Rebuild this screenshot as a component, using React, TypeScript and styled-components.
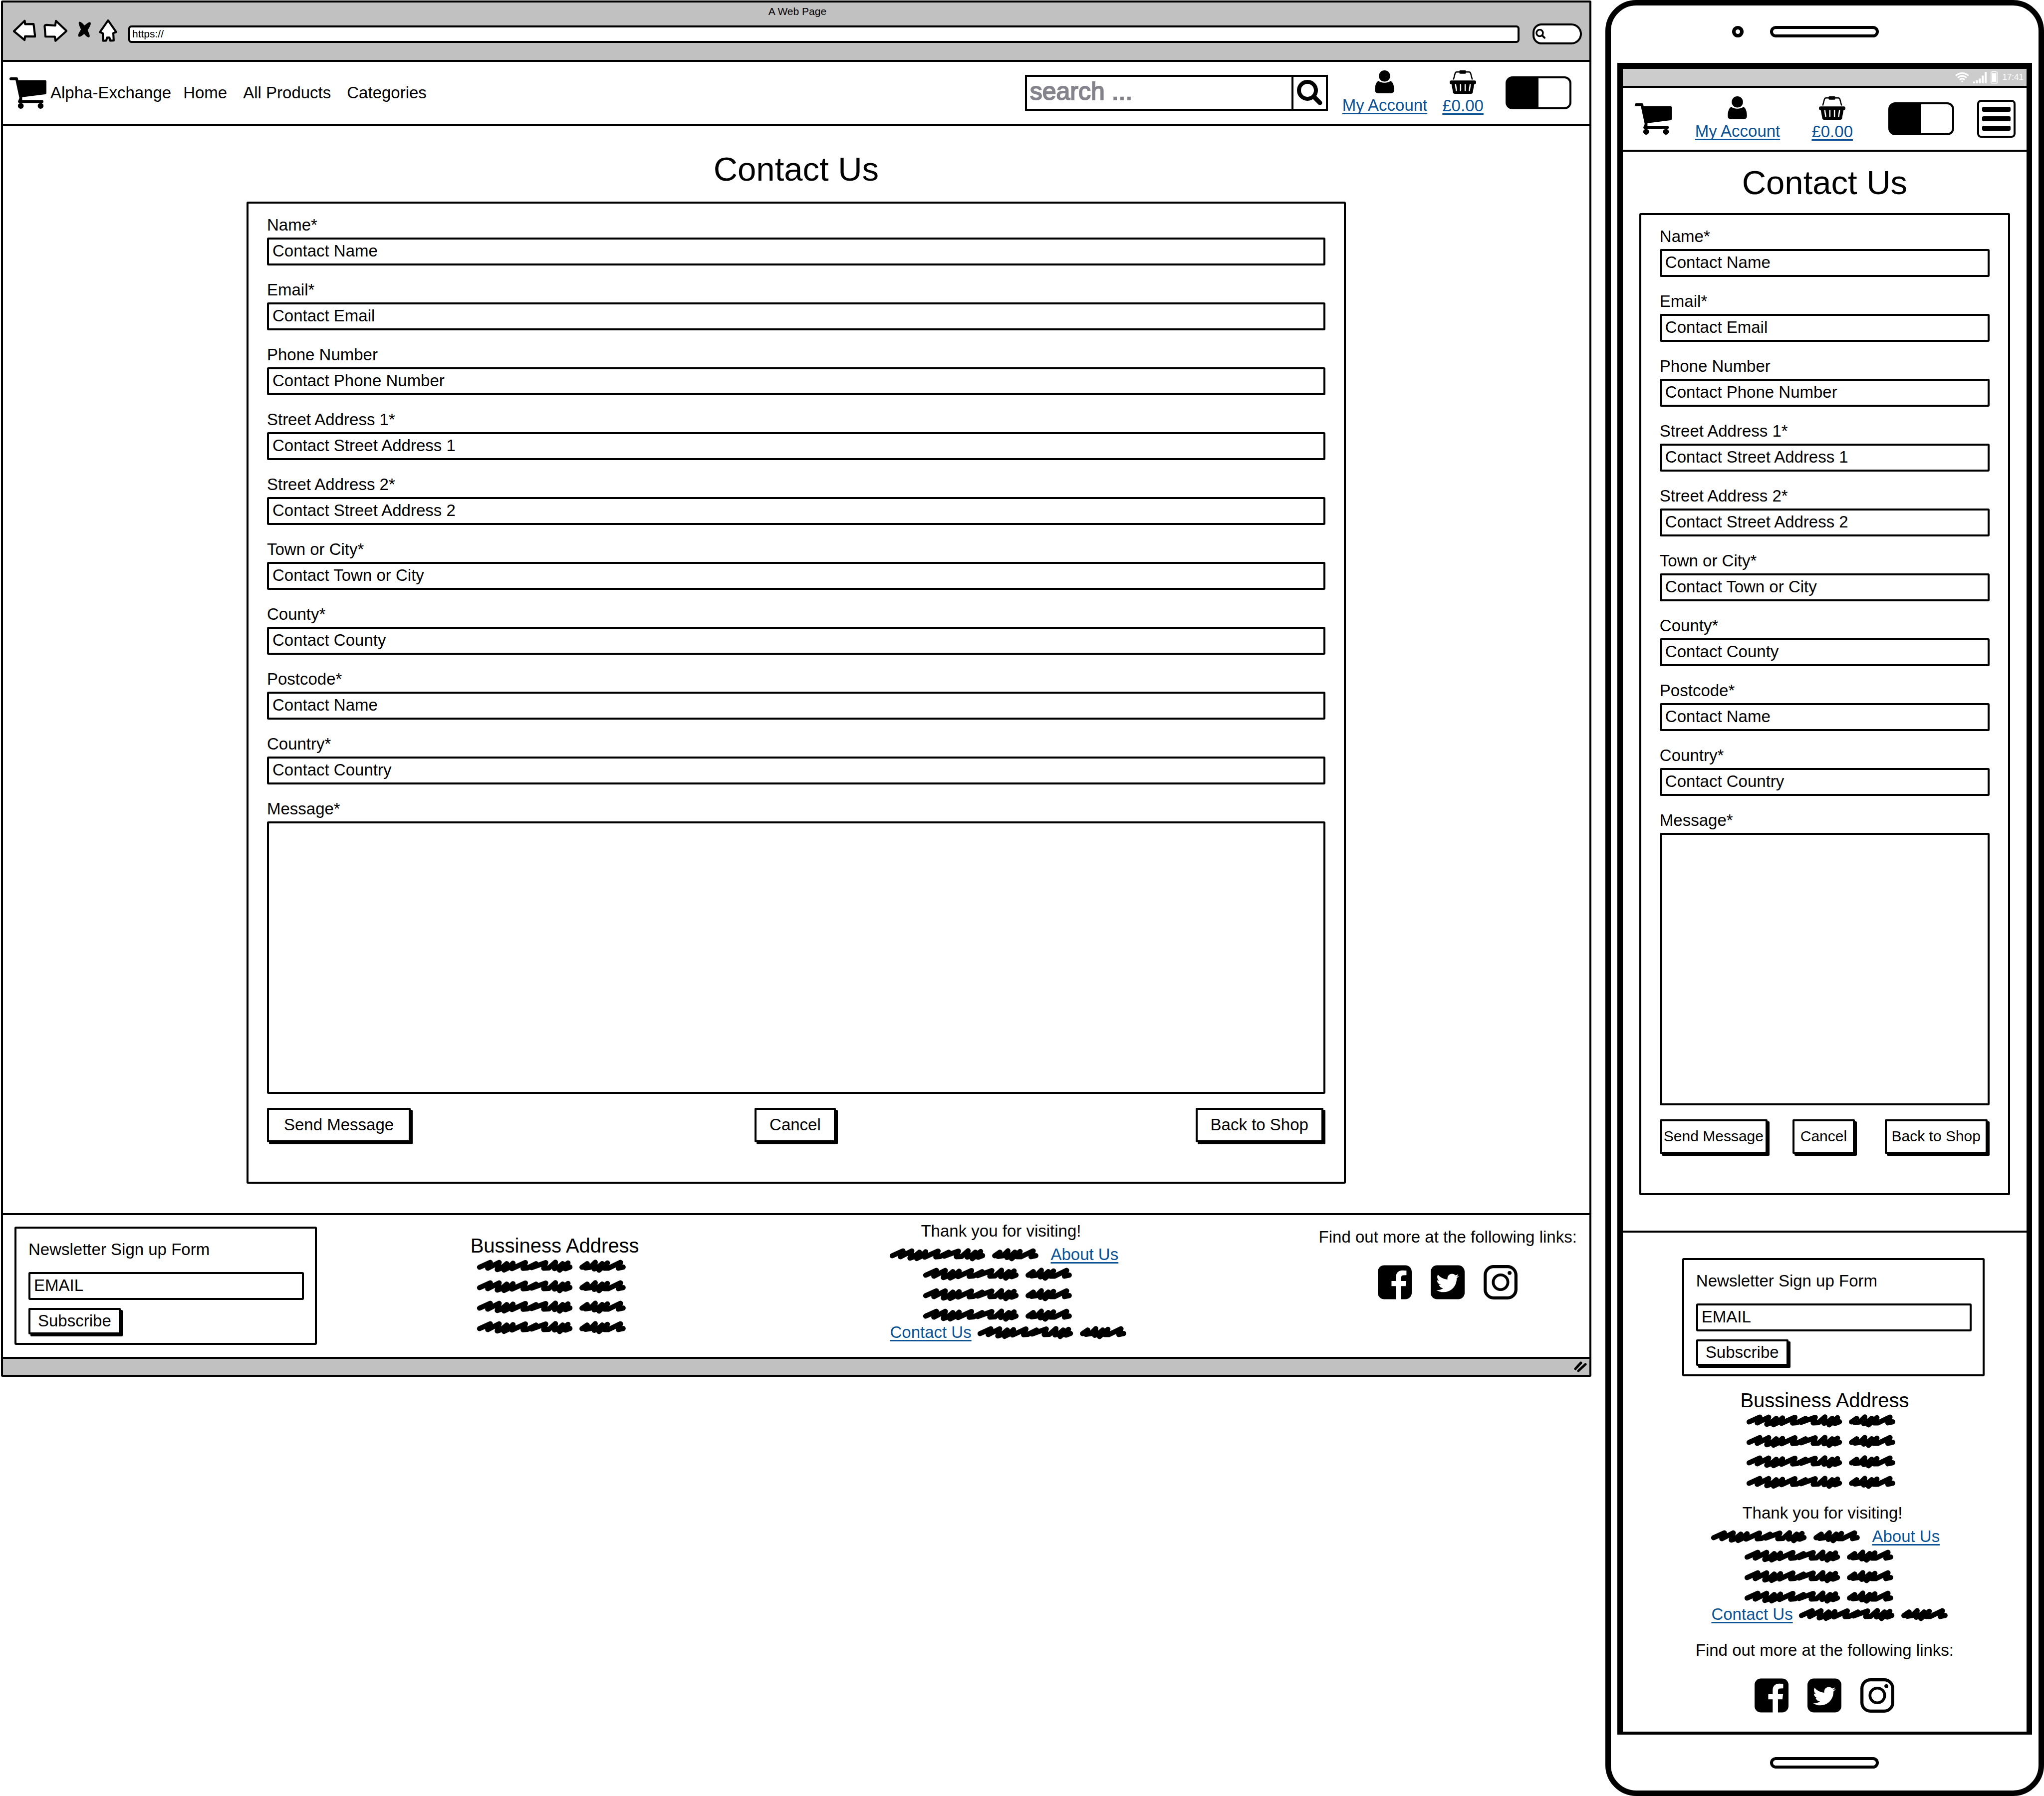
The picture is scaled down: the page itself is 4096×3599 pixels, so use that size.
import React, { useId } from 'react';
import styled, { createGlobalStyle } from 'styled-components';

const ink = '#000';
const chrome = '#c1c1c1';
const linkBlue = '#0b5394';

const GlobalStyle = createGlobalStyle`
  *, *::before, *::after { box-sizing: border-box; }
  body {
    margin: 0;
    background: #fff;
    color: ${ink};
    font-family: "Liberation Sans", Arial, sans-serif;
    font-size: 33px;
    line-height: 40px;
  }
  h1, h2, p { margin: 0; font-weight: 400; }
  button, input, textarea { font: inherit; color: inherit; margin: 0; }
  svg { display: block; flex: none; }
`;

/* ---------- page ---------- */

const Page = styled.div`
  display: grid;
  grid-template-columns: minmax(0, 29fr) minmax(0, 8fr);
  column-gap: 28px;
  align-items: start;
  padding-left: 2px;
`;

/* ---------- browser window ---------- */

const BrowserWindow = styled.section`
  margin-top: 1px;
  border: 4px solid ${ink};
  border-radius: 3px;
`;

const ChromeBar = styled.header`
  padding: 6px 15px 22px 20px;
  background: ${chrome};
`;

const ChromeTitle = styled.p`
  margin-bottom: 3px;
  font-size: 21px;
  line-height: 24px;
  text-align: center;
`;

const ChromeRow = styled.div`
  display: flex;
  align-items: center;
  height: 60px;
`;

const ChromeTools = styled.div`
  display: flex;
  align-self: flex-start;
  gap: 15px;
  margin-right: 22px;
`;

const PlainButton = styled.button`
  padding: 0;
  border: 0;
  background: none;
`;

const AddressInput = styled.input`
  flex: 1;
  min-width: 0;
  height: 35px;
  padding: 0 4px;
  border: 4px solid ${ink};
  border-radius: 6px;
  background: #fff;
  font-size: 21px;
`;

const ChromeSearch = styled(PlainButton)`
  display: flex;
  align-items: center;
  width: 99px;
  height: 42px;
  margin-left: 26px;
  padding-left: 2px;
  border: 4px solid ${ink};
  border-radius: 24px 28px 28px 24px;
  background: #fff;
`;

const StatusStrip = styled.div`
  display: flex;
  justify-content: flex-end;
  align-items: center;
  height: 36px;
  padding-right: 5px;
  border-top: 4px solid ${ink};
  background: ${chrome};
`;

/* ---------- navigation ---------- */

const NavBar = styled.nav`
  display: flex;
  align-items: center;
  height: 132px;
  padding: 0 36px 0 13px;
  border-top: 4px solid ${ink};
  border-bottom: 4px solid ${ink};
`;

const PhoneNavBar = styled(NavBar)`
  display: grid;
  grid-template-columns: 121fr 234fr 154fr 178fr 77fr;
  justify-items: start;
  padding: 0 22px 0 24px;
`;

const Brand = styled.a`
  display: flex;
  align-items: center;
  gap: 8px;
  margin-right: 24px;
  color: inherit;
  text-decoration: none;
`;

const MenuLinks = styled.div`
  display: flex;
  flex: 1;
  gap: 32px;
`;

const MenuLink = styled.a`
  color: inherit;
  text-decoration: none;
`;

const SearchForm = styled.form`
  display: flex;
  width: 607px;
  height: 72px;
  margin-right: 29px;
  border: 4px solid ${ink};
`;

const SearchInput = styled.input`
  flex: 1;
  min-width: 0;
  padding: 0 6px 6px;
  border: 0;
  background: none;
  font-size: 50px;
  &::placeholder {
    color: #85838c;
    opacity: 1;
    -webkit-text-stroke: 2px #85838c;
  }
`;

const SearchButton = styled(PlainButton)`
  display: grid;
  place-items: center;
  width: 69px;
  border-left: 4px solid ${ink};
`;

const TextLink = styled.a`
  color: ${linkBlue};
  text-decoration: underline;
  text-decoration-thickness: 3px;
  text-underline-offset: 4px;
  text-decoration-skip-ink: none;
  white-space: nowrap;
`;

const IconLink = styled(TextLink)`
  display: flex;
  flex-direction: column;
  align-items: center;
  gap: 4px;
  svg { color: ${ink}; }
`;

const NavLinks = styled.div`
  display: flex;
  gap: 30px;
  margin-right: 44px;
`;

const Toggle = styled.input`
  appearance: none;
  flex: none;
  width: 132px;
  height: 66px;
  border: 4px solid ${ink};
  border-radius: 14px;
  background: linear-gradient(90deg, ${ink} 50%, #fff 50%);
`;

const MenuButton = styled(PlainButton)`
  display: flex;
  flex-direction: column;
  justify-content: center;
  align-items: center;
  gap: 9px;
  width: 77px;
  height: 76px;
  border: 4px solid ${ink};
  border-radius: 8px;
`;

const MenuBar = styled.span`
  width: 57px;
  height: 10px;
  border-radius: 3px;
  background: ${ink};
`;

/* ---------- contact form ---------- */

const Main = styled.main<{ $phone?: boolean }>`
  padding: ${p => (p.$phone ? '22px 33px 71px' : '47px 15.35% 59px')};
`;

const PageTitle = styled.h1<{ $phone?: boolean }>`
  margin-bottom: ${p => (p.$phone ? 21 : 25)}px;
  font-size: 67px;
  line-height: 80px;
  text-align: center;
`;

const FormCard = styled.form`
  padding: 23px 37px 75px;
  border: 4px solid ${ink};
  border-radius: 3px;
`;

const Fields = styled.div`
  display: grid;
  gap: 29px;
  margin-bottom: 28px;
`;

const Field = styled.div`
  display: grid;
  gap: 5px;
`;

const TextInput = styled.input`
  width: 100%;
  height: 56px;
  padding: 0 7px 3px;
  border: 4px solid ${ink};
  border-radius: 3px;
  background: #fff;
`;

const MessageBox = styled.textarea`
  display: block;
  width: 100%;
  height: 546px;
  padding: 8px;
  border: 4px solid ${ink};
  border-radius: 3px;
  background: #fff;
  resize: none;
`;

const ButtonRow = styled.div`
  display: grid;
  grid-template-columns: 1fr auto 1fr;
  > :first-child { justify-self: start; }
  > :last-child { justify-self: end; }
`;

const ShadowButton = styled.button<{ $pad: number; $size?: number; $height?: number }>`
  height: ${p => p.$height ?? 69}px;
  margin: 0 4px 4px 0;
  padding: 0 ${p => p.$pad}px 2px;
  border: 4px solid ${ink};
  border-radius: 2px;
  background: #fff;
  box-shadow: 4px 4px 0 ${ink};
  font-size: ${p => p.$size ?? 33}px;
  white-space: nowrap;
`;

/* ---------- footer ---------- */

const BrowserFooter = styled.footer`
  display: grid;
  grid-template-columns: 606px 953fr 844fr 727fr;
  align-items: start;
  padding: 12px 25px 24px 23px;
  border-top: 4px solid ${ink};
`;

const PhoneFooter = styled.footer`
  display: flex;
  flex-direction: column;
  padding: 51px 0 38px;
  border-top: 4px solid ${ink};
`;

const FooterCell = styled.div<{ $top?: number; $align?: string }>`
  display: flex;
  flex-direction: column;
  align-items: ${p => p.$align ?? 'center'};
  padding-top: ${p => p.$top ?? 0}px;
`;

const NewsletterCell = styled.div<{ $phone?: boolean }>`
  padding: ${p => (p.$phone ? '0 84px 0 119px' : '11px 0 0')};
`;

const NewsletterForm = styled.form`
  padding: 22px 22px 13px 24px;
  border: 4px solid ${ink};
  border-radius: 3px;
`;

const NewsletterLabel = styled.label`
  display: block;
  margin-bottom: 25px;
`;

const NewsletterInput = styled(TextInput)`
  display: block;
  margin-bottom: 16px;
`;

const AddressTitle = styled.h2`
  margin-bottom: 4px;
  font-size: 40px;
  line-height: 48px;
`;

const ScribbleStack = styled.div`
  display: grid;
  gap: 14px;
`;

const AddressStack = styled(ScribbleStack)`
  padding-right: 14px;
`;

const VisitBlock = styled.div`
  width: 454px;
  white-space: nowrap;
`;

const VisitLine = styled.div<{ $gap: number }>`
  display: flex;
  align-items: center;
  gap: ${p => p.$gap}px;
  line-height: 36px;
`;

const VisitTitle = styled.p`
  margin-bottom: 9px;
  padding-left: 62px;
`;

const VisitStack = styled(ScribbleStack)`
  padding: 8px 0 3px 67px;
`;

const SocialBlock = styled.div`
  display: flex;
  flex-direction: column;
  align-items: center;
  gap: 36px;
  white-space: nowrap;
`;

const SocialRow = styled.div`
  display: flex;
  gap: 38px;
`;

/* ---------- phone ---------- */

const PhoneBody = styled.section`
  border: 11px solid ${ink};
  border-radius: 62px;
`;

const PhoneTop = styled.div`
  display: grid;
  grid-template-columns: 1fr auto 1fr;
  align-items: center;
  height: 115px;
  padding-bottom: 11px;
`;

const Camera = styled.span`
  justify-self: end;
  width: 23px;
  height: 23px;
  margin-right: 53px;
  border: 7px solid ${ink};
  border-radius: 50%;
`;

const Slot = styled.span`
  width: 218px;
  height: 23px;
  border: 6px solid ${ink};
  border-radius: 12px;
`;

const PhoneScreen = styled.div`
  margin: 0 13px;
  border: 11px solid ${ink};
  border-top-width: 12px;
  border-bottom-width: 6px;
`;

const PhoneStatus = styled.div`
  display: flex;
  justify-content: flex-end;
  align-items: center;
  height: 34px;
  padding-right: 6px;
  background: #ccc;
  color: #fff;
  font-size: 17px;
  line-height: 20px;
`;

const StatusIcons = styled.span`
  display: flex;
  align-items: center;
  gap: 8px;
  margin-right: 9px;
`;

const PhoneBottom = styled.div`
  display: grid;
  place-items: center;
  height: 112px;
`;

/* ---------- drawings ---------- */

const BackArt = () => (
  <svg width="46" height="46" viewBox="65 77 165 165" fill="#fff" stroke={ink} strokeWidth="15" strokeLinejoin="round" aria-hidden="true">
    <path d="M72 165 L149 90 L152 114 L213 113 Q219 160 224 203 L152 202 L148 228 Z" />
  </svg>
);

const ForwardArt = () => (
  <svg width="48" height="46" viewBox="285 77 174 165" fill="#fff" stroke={ink} strokeWidth="15" strokeLinejoin="round" aria-hidden="true">
    <path d="M453 163 L376 90 L371 124 L308 119 Q292 120 294 132 L300 204 L368 205 L373 235 Z" />
  </svg>
);

const StopArt = () => (
  <svg width="33" height="46" viewBox="512 77 118 165" aria-hidden="true">
    <ellipse cx="579" cy="153" rx="66" ry="19" transform="rotate(57 579 153)" />
    <ellipse cx="581" cy="153" rx="66" ry="20" transform="rotate(-50 581 153)" />
  </svg>
);

const HomeArt = () => (
  <svg width="37" height="46" viewBox="682 77 135 165" fill="#fff" stroke={ink} strokeWidth="15" strokeLinejoin="round" aria-hidden="true">
    <path d="M750 86 L809 171 L788 179 L791 233 L766 234 L760 212 L742 212 L736 234 L714 235 L711 180 L690 172 Z" />
  </svg>
);

const tools = [
  { name: 'Back', Art: BackArt },
  { name: 'Forward', Art: ForwardArt },
  { name: 'Stop', Art: StopArt },
  { name: 'Home', Art: HomeArt },
];

const CartIcon = () => (
  <svg width="74" height="63" viewBox="0 0 268 228" aria-hidden="true">
    <path d="M10 0H54Q60 0 61 6L64 21H258Q268 21 268 31V112Q268 122 258 123L92 144V165H236A10 10 0 0 1 236 186H72Q62 186 62 174L72 150L44 21H10A10 10 0 0 1 10 0Z" />
    <circle cx="82" cy="207" r="21" />
    <circle cx="226" cy="207" r="21" />
  </svg>
);

const UserIcon = () => (
  <svg width="39" height="46" viewBox="0 0 46 55" fill="currentColor" aria-hidden="true">
    <ellipse cx="23" cy="13.5" rx="13.5" ry="13.5" />
    <path d="M9 25 C14 31 32 31 37 25 C43 27 46 36 46 47 Q46 55 38 55 L8 55 Q0 55 0 47 C0 36 3 27 9 25 Z" />
  </svg>
);

const BasketIcon = () => (
  <svg width="53" height="47" viewBox="0 0 63 56" fill="currentColor" aria-hidden="true">
    <path d="M9 22 L13 7 Q14 4 17 4 H46 Q49 4 50 7 L54 22" fill="none" stroke="currentColor" strokeWidth="3" />
    <rect x="23" y="0" width="16" height="8" rx="2" />
    <rect x="0" y="24" width="63" height="9" rx="4" />
    <path d="M4 31 H59 L55 53 Q54 56 51 56 H12 Q9 56 8 53 Z" />
    <path d="M14 34 L16 48 M26 34 V48 M37 34 V48 M49 34 L47 48" stroke="#fff" strokeWidth="3" strokeLinecap="round" />
  </svg>
);

const SearchIcon = ({ size, weight = 8 }: { size: number; weight?: number }) => (
  <svg width={size} height={size} viewBox="0 0 52 52" fill="none" stroke="currentColor" aria-hidden="true">
    <circle cx="22" cy="21" r="17" strokeWidth={weight} />
    <path d="M35 34 L47 46" strokeWidth={weight + 1} strokeLinecap="round" />
  </svg>
);

const ScribbleArt = styled.svg`
  overflow: visible;
`;

const Scribble = () => (
  <ScribbleArt width="298" height="27" viewBox="0 0 1076 96" fill="none" stroke={ink} strokeWidth="37" strokeLinecap="round" strokeLinejoin="round" aria-hidden="true">
    <path d="M18 55 L96 20 L77 62 L160 20 L146 72 L175 62 L215 29 L195 75 L225 60 L260 26 L252 65 L350 21 L333 63 L365 60 L427 29 L395 58 L497 21 L482 62 L520 60 L567 19 L560 65 L590 55 L620 29 L597 76 L658 24 L640 66 L672 54 L620 62" />
    <path d="M759 55 L797 29 L783 60 L820 55 L855 19 L847 67 L870 60 L905 29 L882 76 L943 24 L920 62 L950 62 L1038 20 L1022 62 L1057 54" />
  </ScribbleArt>
);

const FacebookIcon = () => (
  <svg width="68" height="69" viewBox="0 0 1536 1536" aria-hidden="true">
    <path d="M1248 0q119 0 203.500 84.500t84.500 203.500v960q0 119-84.500 203.500t-203.500 84.500h-188v-595h199l30-232h-229v-148q0-56 23.500-84t91.500-28l122-1v-207q-63-9-178-9q-136 0-217.500 80t-81.500 226v171h-200v232h200v595h-532q-119 0-203.500-84.500t-84.500-203.500v-960q0-119 84.500-203.500t203.500-84.500z" />
  </svg>
);

const TwitterIcon = () => (
  <svg width="68" height="69" viewBox="0 0 1536 1536" aria-hidden="true">
    <path d="M1280 482q-56 24-121 34 68-40 93-117-65 38-134 51-61-66-153-66-87 0-148.500 61.500t-61.500 148.500q0 29 5 48-129-7-242-65t-192-155q-29 50-29 106 0 114 91 175-47-1-100-26v2q0 75 50 133.500t123 72.500q-29 8-51 8-13 0-39-4 21 63 74.500 104t121.500 42q-116 90-261 90-26 0-50-3 148 94 322 94 112 0 210-35.500t168-95 120.500-137 75-162 24.500-168.500q0-18-1-27 63-45 105-109z m256-194v960q0 119-84.500 203.500t-203.500 84.500h-960q-119 0-203.500-84.500t-84.500-203.500v-960q0-119 84.500-203.500t203.500-84.500h960q119 0 203.500 84.500t84.500 203.500z" />
  </svg>
);

const InstagramIcon = () => (
  <svg width="68" height="69" viewBox="0 0 120 122" fill="none" stroke={ink} aria-hidden="true">
    <rect x="5.500" y="5.500" width="109" height="111" rx="30" strokeWidth="11" />
    <circle cx="60" cy="61" r="26" strokeWidth="10" />
    <circle cx="92" cy="28" r="7" fill={ink} stroke="none" />
  </svg>
);

const WifiIcon = () => (
  <svg width="28" height="20" viewBox="0 0 100 72" fill="none" stroke="#fff" strokeWidth="11" aria-hidden="true">
    <path d="M4 24 Q50 -12 96 24 M18 39 Q50 12 82 39 M32 53 Q50 38 68 53" />
    <path d="M41 63 Q50 56 59 63 L50 72 Z" fill="#fff" stroke="none" />
  </svg>
);

const SignalIcon = () => (
  <svg width="27" height="23" viewBox="0 0 97 82" fill="#fff" aria-hidden="true">
    <path d="M0 70h15v12H0z M21 61h14v21H21z M41 48h15v34H41z M62 27h14v55H62z M83 0h14v82H83z" />
  </svg>
);

const BatteryIcon = () => (
  <svg width="14" height="26" viewBox="0 0 52 94" aria-hidden="true">
    <path d="M3 10 Q3 7 8 7 H15 V3 H37 V7 H44 Q49 7 49 10 V88 Q49 91 44 91 H8 Q3 91 3 88 Z" fill="none" stroke="#fff" strokeWidth="5" />
    <rect x="10" y="16" width="32" height="68" fill="#fff" />
  </svg>
);

/* ---------- shared parts ---------- */

const fields = [
  ['Name*', 'Contact Name'],
  ['Email*', 'Contact Email'],
  ['Phone Number', 'Contact Phone Number'],
  ['Street Address 1*', 'Contact Street Address 1'],
  ['Street Address 2*', 'Contact Street Address 2'],
  ['Town or City*', 'Contact Town or City'],
  ['County*', 'Contact County'],
  ['Postcode*', 'Contact Name'],
  ['Country*', 'Contact Country'],
];

const ContactForm = ({ phone }: { phone?: boolean }) => {
  const id = useId();
  const size = phone ? 30 : 33;
  return (
    <Main $phone={phone}>
      <PageTitle $phone={phone}>Contact Us</PageTitle>
      <FormCard>
        <Fields>
          {fields.map(([label, value], i) => (
            <Field key={label}>
              <label htmlFor={`${id}-${i}`}>{label}</label>
              <TextInput id={`${id}-${i}`} defaultValue={value} />
            </Field>
          ))}
          <Field>
            <label htmlFor={`${id}-message`}>Message*</label>
            <MessageBox id={`${id}-message`} />
          </Field>
        </Fields>
        <ButtonRow>
          <ShadowButton type="button" $size={size} $pad={phone ? 4 : 30}>Send Message</ShadowButton>
          <ShadowButton type="button" $size={size} $pad={phone ? 12 : 26}>Cancel</ShadowButton>
          <ShadowButton type="button" $size={size} $pad={phone ? 10 : 26}>Back to Shop</ShadowButton>
        </ButtonRow>
      </FormCard>
    </Main>
  );
};

const AccountLink = () => (
  <IconLink href="#account"><UserIcon />My Account</IconLink>
);

const BasketLink = () => (
  <IconLink href="#basket"><BasketIcon />£0.00</IconLink>
);

const Newsletter = ({ phone }: { phone?: boolean }) => {
  const id = useId();
  return (
    <NewsletterCell $phone={phone}>
      <NewsletterForm>
        <NewsletterLabel htmlFor={id}>Newsletter Sign up Form</NewsletterLabel>
        <NewsletterInput id={id} defaultValue="EMAIL" />
        <ShadowButton type="button" $pad={15} $height={53}>Subscribe</ShadowButton>
      </NewsletterForm>
    </NewsletterCell>
  );
};

const Address = ({ top }: { top: number }) => (
  <FooterCell $top={top}>
    <AddressTitle>Bussiness Address</AddressTitle>
    <AddressStack>
      <Scribble /><Scribble /><Scribble /><Scribble />
    </AddressStack>
  </FooterCell>
);

const Visit = ({ top }: { top: number }) => (
  <FooterCell $top={top}>
    <VisitBlock>
      <VisitTitle>Thank you for visiting!</VisitTitle>
      <VisitLine $gap={24}><Scribble /><TextLink href="#about">About Us</TextLink></VisitLine>
      <VisitStack><Scribble /><Scribble /><Scribble /></VisitStack>
      <VisitLine $gap={12}><TextLink href="#contact">Contact Us</TextLink><Scribble /></VisitLine>
    </VisitBlock>
  </FooterCell>
);

const Social = ({ top, align }: { top: number; align?: string }) => (
  <FooterCell $top={top} $align={align}>
    <SocialBlock>
      <p>Find out more at the following links:</p>
      <SocialRow>
        <a href="#facebook" aria-label="Facebook"><FacebookIcon /></a>
        <a href="#twitter" aria-label="Twitter"><TwitterIcon /></a>
        <a href="#instagram" aria-label="Instagram"><InstagramIcon /></a>
      </SocialRow>
    </SocialBlock>
  </FooterCell>
);

const Browser = () => (
  <BrowserWindow>
    <ChromeBar>
      <ChromeTitle>A Web Page</ChromeTitle>
      <ChromeRow>
        <ChromeTools>
          {tools.map(({ name, Art }) => (
            <PlainButton key={name} type="button" aria-label={name}><Art /></PlainButton>
          ))}
        </ChromeTools>
        <AddressInput aria-label="Address" defaultValue="https://" />
        <ChromeSearch type="button" aria-label="Search the web"><SearchIcon size={20} weight={9} /></ChromeSearch>
      </ChromeRow>
    </ChromeBar>
    <NavBar>
      <Brand href="#home"><CartIcon />Alpha-Exchange</Brand>
      <MenuLinks>
        <MenuLink href="#home">Home</MenuLink>
        <MenuLink href="#products">All Products</MenuLink>
        <MenuLink href="#categories">Categories</MenuLink>
      </MenuLinks>
      <SearchForm>
        <SearchInput aria-label="Search" placeholder="search ..." />
        <SearchButton type="button" aria-label="Search"><SearchIcon size={52} /></SearchButton>
      </SearchForm>
      <NavLinks>
        <AccountLink />
        <BasketLink />
      </NavLinks>
      <Toggle type="checkbox" role="switch" aria-label="Theme" />
    </NavBar>
    <ContactForm />
    <BrowserFooter>
      <Newsletter />
      <Address top={25} />
      <Visit top={0} />
      <Social top={12} align="flex-end" />
    </BrowserFooter>
    <StatusStrip>
      <svg width="26" height="22" viewBox="0 0 26 22" stroke={ink} strokeWidth="5" strokeLinecap="round" aria-hidden="true">
        <path d="M3 15 L14 3 M9 19 L23 6" />
      </svg>
    </StatusStrip>
  </BrowserWindow>
);

const Phone = () => (
  <PhoneBody>
    <PhoneTop>
      <Camera />
      <Slot />
    </PhoneTop>
    <PhoneScreen>
      <PhoneStatus>
        <StatusIcons><WifiIcon /><SignalIcon /><BatteryIcon /></StatusIcons>
        17:41
      </PhoneStatus>
      <PhoneNavBar>
        <a href="#home" aria-label="Alpha-Exchange"><CartIcon /></a>
        <AccountLink />
        <BasketLink />
        <Toggle type="checkbox" role="switch" aria-label="Theme" />
        <MenuButton type="button" aria-label="Menu"><MenuBar /><MenuBar /><MenuBar /></MenuButton>
      </PhoneNavBar>
      <ContactForm phone />
      <PhoneFooter>
        <Newsletter phone />
        <Address top={24} />
        <Visit top={28} />
        <Social top={34} />
      </PhoneFooter>
    </PhoneScreen>
    <PhoneBottom><Slot /></PhoneBottom>
  </PhoneBody>
);

export default function App() {
  return (
    <>
      <GlobalStyle />
      <Page>
        <Browser />
        <Phone />
      </Page>
    </>
  );
}
